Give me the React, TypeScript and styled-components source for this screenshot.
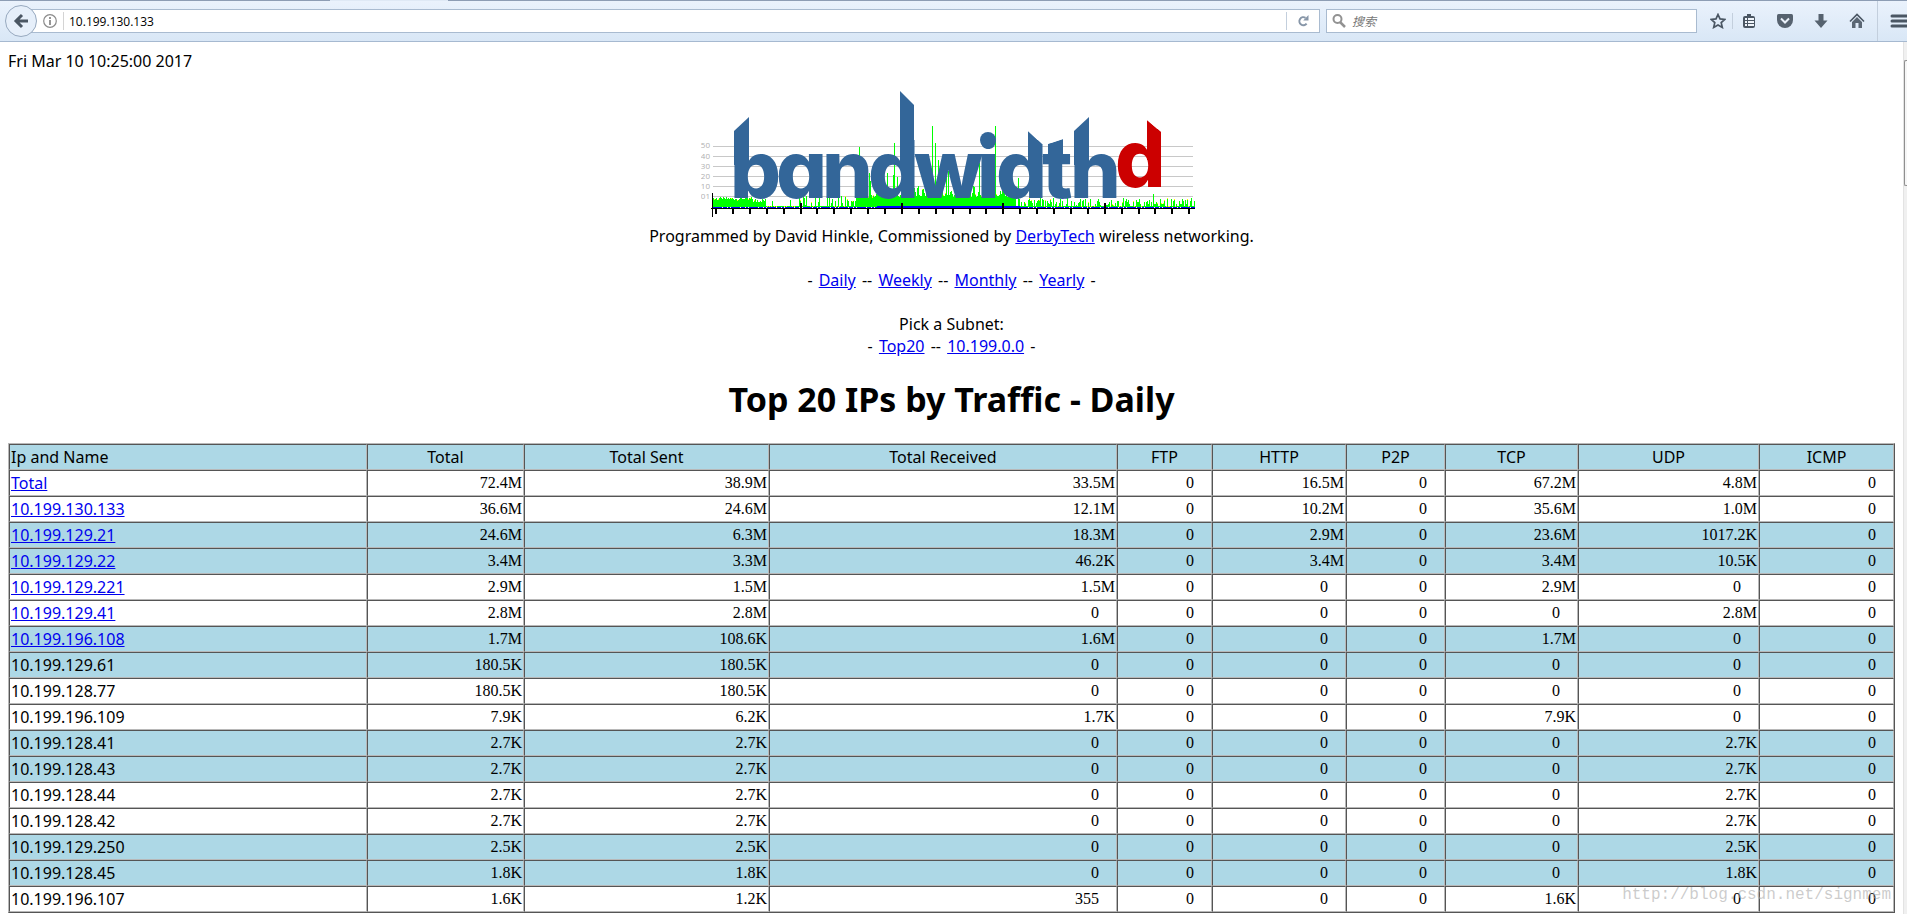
import React from 'react';
import styled, { createGlobalStyle } from 'styled-components';

const GlobalStyle = createGlobalStyle`
  * { box-sizing: border-box; }
  body {
    margin: 0;
    background: #fff;
    color: #000;
    font: 16px/22px 'Noto Sans', 'Noto Sans CJK SC', sans-serif;
    overflow-x: hidden;
  }
`;

/* ---------- browser chrome ---------- */

const TabStrip = styled.div`
  display: flex;
  height: 1px;
  background: #8d9db4;
  padding-left: 330px;
`;

const ActiveTab = styled.div`
  width: 118px;
  background: #dfe9f5;
`;

const Toolbar = styled.header`
  display: flex;
  align-items: center;
  height: 41px;
  padding-left: 5px;
  overflow: hidden;
  background: linear-gradient(#eaf2fc, #d9e7f6);
  border-bottom: 1px solid #a6b9d0;
`;

const IconButton = styled.button<{ $width?: number }>`
  display: flex;
  align-items: center;
  justify-content: center;
  flex: none;
  width: ${(p) => p.$width ?? 36}px;
  height: 24px;
  padding: 0;
  border: 0;
  background: none;
  color: #4a5663;
`;

const BackButton = styled(IconButton)`
  z-index: 1;
  height: 32px;
  border: 1px solid #97a9bf;
  border-radius: 50%;
  background: #e6effa;
`;

const Field = styled.div<{ $grow: boolean }>`
  display: flex;
  align-items: center;
  flex: ${(p) => (p.$grow ? '1 1 0' : '0 0 371px')};
  height: 24px;
  border: 1px solid #a9bbd0;
  background: #fff;
`;

const AddressField = styled(Field)`
  margin: 0 6px 0 -6px;
  padding-left: 10px;
`;

const FieldInput = styled.input<{ $inset: number }>`
  flex: 1;
  min-width: 0;
  padding: 0 0 0 ${(p) => p.$inset}px;
  border: 0;
  outline: 0;
  background: none;
  color: #000;
  font: 12px 'Open Sans', 'Noto Sans CJK SC', sans-serif;
  &::placeholder { color: #777; opacity: 1; font-style: italic; }
`;

const Divider = styled.span<{ $height: number }>`
  flex: none;
  width: 1px;
  height: ${(p) => p.$height}px;
  background: #c3cfdd;
`;

const IdentityDivider = styled(Divider)`
  margin-left: 5px;
  background: #d4d4d4;
`;

const Tools = styled.nav`
  display: flex;
  align-items: center;
  flex: none;
  width: 210px;
  padding-left: 7px;
`;

/* ---------- page ---------- */

const Viewport = styled.div`
  display: flex;
`;

const Page = styled.main`
  flex: 1;
  min-width: 0;
  padding: 8px 8px 1px;
`;

const ScrollTrack = styled.div`
  flex: none;
  width: 4px;
  padding-top: 18px;
  background: #f0f0f0;
  border-left: 1px solid #e3e3e3;
`;

const ScrollThumb = styled.div`
  height: 126px;
  border: 1px solid #8f8f8f;
  border-right: 0;
  border-radius: 2px 0 0 2px;
  background: #f6f6f6;
`;

const Intro = styled.div`
  display: flex;
  flex-direction: column;
  align-items: center;
  text-align: center;
`;

const Logo = styled.svg`
  display: block;
  margin: 16px 0 7px;
`;

const Line = styled.p<{ $gap?: boolean }>`
  margin: ${(p) => (p.$gap ? 22 : 0)}px 0 0;
`;

const Link = styled.a`
  color: #0000ee;
  text-decoration: underline;
`;

const Dashes = styled.span`
  padding: 0 2px;
`;

const Heading = styled.h1`
  margin: 21px 0 23px;
  font-size: 34px;
  line-height: 42px;
  font-weight: 700;
`;

const TrafficTable = styled.table`
  width: 100%;
  table-layout: fixed;
  border-collapse: separate;
  border-spacing: 0;
  border: 1px solid;
  border-color: #b8b8b8 #555 #555 #b8b8b8;
`;

const Row = styled.tr<{ $shaded: boolean }>`
  background: ${(p) => (p.$shaded ? '#add8e6' : '#fff')};
`;

const cellBorder = `
  height: 26px;
  padding: 1px;
  border: 1px solid;
  border-color: #555 #b8b8b8 #b8b8b8 #555;
`;

const HeadCell = styled.th<{ $left: boolean }>`
  ${cellBorder}
  font-weight: 400;
  text-align: ${(p) => (p.$left ? 'left' : 'center')};
`;

const NameCell = styled.td`
  ${cellBorder}
`;

const NumberCell = styled.td<{ $unitless: boolean }>`
  ${cellBorder}
  padding-right: ${(p) => (p.$unitless ? 17 : 1)}px;
  font-family: 'Liberation Serif', serif;
  text-align: right;
`;

const Watermark = styled.div`
  position: absolute;
  right: 16px;
  top: 884px;
  color: rgba(170, 170, 170, 0.6);
  font: 16px/22px 'Liberation Mono', monospace;
  pointer-events: none;
`;

/* ---------- data ---------- */

const columns: [string, number][] = [
  ['Ip and Name', 358], ['Total', 157], ['Total Sent', 245], ['Total Received', 348], ['FTP', 95],
  ['HTTP', 134], ['P2P', 99], ['TCP', 133], ['UDP', 181], ['ICMP', 135],
];

const hosts: [string, string][] = [
  ['Total', '72.4M 38.9M 33.5M 0 16.5M 0 67.2M 4.8M 0'],
  ['10.199.130.133', '36.6M 24.6M 12.1M 0 10.2M 0 35.6M 1.0M 0'],
  ['10.199.129.21', '24.6M 6.3M 18.3M 0 2.9M 0 23.6M 1017.2K 0'],
  ['10.199.129.22', '3.4M 3.3M 46.2K 0 3.4M 0 3.4M 10.5K 0'],
  ['10.199.129.221', '2.9M 1.5M 1.5M 0 0 0 2.9M 0 0'],
  ['10.199.129.41', '2.8M 2.8M 0 0 0 0 0 2.8M 0'],
  ['10.199.196.108', '1.7M 108.6K 1.6M 0 0 0 1.7M 0 0'],
  ['10.199.129.61', '180.5K 180.5K 0 0 0 0 0 0 0'],
  ['10.199.128.77', '180.5K 180.5K 0 0 0 0 0 0 0'],
  ['10.199.196.109', '7.9K 6.2K 1.7K 0 0 0 7.9K 0 0'],
  ['10.199.128.41', '2.7K 2.7K 0 0 0 0 0 2.7K 0'],
  ['10.199.128.43', '2.7K 2.7K 0 0 0 0 0 2.7K 0'],
  ['10.199.128.44', '2.7K 2.7K 0 0 0 0 0 2.7K 0'],
  ['10.199.128.42', '2.7K 2.7K 0 0 0 0 0 2.7K 0'],
  ['10.199.129.250', '2.5K 2.5K 0 0 0 0 0 2.5K 0'],
  ['10.199.128.45', '1.8K 1.8K 0 0 0 0 0 1.8K 0'],
  ['10.199.196.107', '1.6K 1.2K 355 0 0 0 1.6K 0 0'],
];

const linkedHosts = 7;

/* ---------- logo ---------- */

const noise = (n: number) => {
  const v = Math.sin(n * 12.9898) * 43758.5453;
  return v - Math.floor(v);
};

const peaks: Record<number, number> = {
  146: 60, 156: 34, 157: 26, 174: 34, 180: 32, 181: 64, 184: 30, 219: 81, 222: 64, 225: 47,
  233: 46, 235: 36, 266: 44, 282: 81, 305: 29, 440: 13,
};

const trafficHeight = (x: number) => {
  const r = noise(x + 3);
  if (peaks[x]) return peaks[x];
  if (x < 40) return 7 + r * 3;
  if (x < 53) return 4 + r * 5;
  if (x < 143) return r > 0.7 ? 2 + noise(x * 2) * 10 : 1;
  if (x < 303) return 10 + r * r * (x < 200 ? 6 : 12);
  return r > 0.5 ? 2 + noise(x * 2) * 7 : 1;
};

const bars = Array.from({ length: 482 }, (_, x) => ({ x: 713 + x, h: Math.round(trafficHeight(x)) }));

const ticks = Array.from({ length: 29 }, (_, i) => ({
  x: Math.round(715 + i * 16.9),
  major: i % 6 === 5,
}));

const gridLines: [string, number][] = [['50', 146], ['40', 156], ['30', 166], ['20', 176], ['10', 186], ['01', 196]];

const BandwidthLogo = () => (
  <Logo width="501" height="130" viewBox="701 88 501 130" role="img" aria-label="bandwidthd">
    <defs>
      <clipPath id="word">
        <path d="M701 88H1028V131L1042 144H1048L1063 139V150H1074V88H1202V218H701Z" />
      </clipPath>
      <clipPath id="suffix">
        <path d="M1100 88H1147V120L1161 132V218H1100Z" />
      </clipPath>
    </defs>
    {gridLines.map(([label, y]) => (
      <React.Fragment key={label}>
        <rect x="713" y={y} width="480" height="1" fill="#c8c8c8" />
        <text x="710" y={label === '50' ? y + 2 : y + 3} textAnchor="end" fontFamily="Open Sans, sans-serif" fontSize="8" fill="#b0b0b0">{label}</text>
      </React.Fragment>
    ))}
    <g shapeRendering="crispEdges">
      {bars.map(({ x, h }) => <rect key={x} x={x} y={207 - h} width="1" height={h} fill="#0f0" />)}
      {bars.filter(({ x, h }) => h < 20 && noise(x * 5) > 0.8).map(({ x, h }) => (
        <rect key={x} x={x} y={207 - h} width="1" height="1" fill="#ff0" />
      ))}
      <path d="M713 207H1195" stroke="#00f" strokeWidth="1" strokeDasharray="9 1 4 1 2 1" />
      <rect x="877" y="206" width="143" height="2" fill="#00f" />
      <rect x="711" y="208" width="484" height="1" fill="#000" />
      <rect x="712" y="193" width="1" height="24" fill="#000" />
      {ticks.map(({ x, major }) => (
        <rect key={x} x={x} y={major ? 203 : 208} width="2" height={major ? 11 : 6} fill="#000" />
      ))}
    </g>
    <g fill="#336699" clipPath="url(#word)">
      <text
        x="730 776 822 868 914 977 996 1042 1070"
        y="198"
        fontFamily="Inter, sans-serif"
        fontSize="80"
        fontWeight="800"
        style={{ fontFeatureSettings: '"cv11"' }}
      >
        bandwidth
      </text>
      <path d="M734 131L749 117V165H734Z" />
      <path d="M900 91L914 105V165H900Z" />
      <path d="M1028 131L1042 144V165H1028Z" />
      <path d="M1074 131L1089 117V165H1074Z" />
      <path d="M1048 144L1063 139V160H1048Z" />
      <circle cx="988" cy="140" r="8" />
    </g>
    <g fill="#c00" clipPath="url(#suffix)">
      <text x="1115" y="187" fontFamily="Inter, sans-serif" fontSize="80" fontWeight="800">d</text>
      <path d="M1147 120L1161 132V160H1147Z" />
    </g>
  </Logo>
);

/* ---------- toolbar icons ---------- */

const BackIcon = () => (
  <svg width="16" height="16" viewBox="0 0 16 16" fill="none" stroke="#4a5663" strokeWidth="3">
    <path d="M15 8H4M9 2L3 8L9 14" />
  </svg>
);
const InfoIcon = () => (
  <svg width="14" height="14" viewBox="0 0 14 14" fill="none" stroke="#8b8b8b">
    <circle cx="7" cy="7" r="6.3" strokeWidth="1.2" />
    <path d="M7 6V11M7 3V5" strokeWidth="1.8" />
  </svg>
);
const ReloadIcon = () => (
  <svg width="12" height="12" viewBox="0 0 12 12" fill="none" stroke="#8796a8" strokeWidth="2">
    <path d="M9.6 8.6A4 4 0 1 1 8.5 2.8" />
    <path d="M11.5 0V5.5H6.2Z" fill="#8796a8" stroke="none" />
  </svg>
);
const SearchIcon = () => (
  <svg width="14" height="14" viewBox="0 0 14 14" fill="none" stroke="#929292" strokeWidth="2">
    <circle cx="5.5" cy="5" r="4" />
    <path d="M8 8L13 13" strokeWidth="2.5" />
  </svg>
);
const StarIcon = () => (
  <svg width="16" height="16" viewBox="0 0 16 16" fill="none" stroke="#4a5663" strokeWidth="1.7">
    <path d="M8 1.5L10 5.9L14.8 6.4L11.2 9.6L12.3 14.4L8 11.9L3.7 14.4L4.8 9.6L1.2 6.4L6 5.9Z" />
  </svg>
);
const ListIcon = () => (
  <svg width="16" height="16" viewBox="0 0 16 16">
    <path d="M4 3H6V1H10V3H12A2 2 0 0 1 14 5V13A2 2 0 0 1 12 15H4A2 2 0 0 1 2 13V5A2 2 0 0 1 4 3Z" fill="#4a5663" />
    <path d="M4 5H6V7H4ZM7 5H13V7H7ZM4 8H6V10H4ZM7 8H13V10H7ZM4 11H6V13H4ZM7 11H13V13H7Z" fill="#f0f5fb" />
  </svg>
);
const PocketIcon = () => (
  <svg width="16" height="16" viewBox="0 0 16 16">
    <path d="M1.5 1H14.5Q16 1 16 2.5V7A8 8 0 0 1 0 7V2.5Q0 1 1.5 1Z" fill="#56626f" />
    <path d="M4 5.5L8 9.5L12 5.5" fill="none" stroke="#eaf1fa" strokeWidth="2" />
  </svg>
);
const DownloadIcon = () => (
  <svg width="14" height="16" viewBox="0 0 14 16">
    <path d="M4.5 1H9.5V7.5H13.5L7 15L0.5 7.5H4.5Z" fill="#56626f" />
  </svg>
);
const HomeIcon = () => (
  <svg width="16" height="16" viewBox="0 0 16 16">
    <path d="M1 8.5L8 1.5L15 8.5" fill="none" stroke="#4a5663" strokeWidth="1.6" />
    <path d="M3 9L8 4L13 9V15H9.5V10H6.5V15H3Z" fill="#5b6774" />
  </svg>
);
const MenuIcon = () => (
  <svg width="20" height="16" viewBox="0 0 20 16" stroke="#4a5663" strokeWidth="3" strokeLinecap="round">
    <path d="M2 3H18M2 8H18M2 13H18" />
  </svg>
);

const LinkList = ({ items }: { items: string[] }) => (
  <>
    {items.map((item, i) => (
      <React.Fragment key={item}>
        <Dashes>{i === 0 ? '- ' : ' -- '}</Dashes>
        <Link href="#">{item}</Link>
      </React.Fragment>
    ))}
    <Dashes>{' -'}</Dashes>
  </>
);

export default function App() {
  return (
    <>
      <GlobalStyle />
      <TabStrip><ActiveTab /></TabStrip>
      <Toolbar>
        <BackButton $width={32} aria-label="Back"><BackIcon /></BackButton>
        <AddressField $grow>
          <IconButton $width={16} aria-label="Site information"><InfoIcon /></IconButton>
          <IdentityDivider $height={18} />
          <FieldInput $inset={5} aria-label="Address" defaultValue="10.199.130.133" />
          <Divider $height={18} />
          <IconButton $width={32} aria-label="Reload"><ReloadIcon /></IconButton>
        </AddressField>
        <Field $grow={false}>
          <IconButton $width={24} aria-label="Search"><SearchIcon /></IconButton>
          <FieldInput $inset={1} aria-label="搜索" placeholder="搜索" />
        </Field>
        <Tools aria-label="Tools">
          <IconButton $width={28} aria-label="Bookmark"><StarIcon /></IconButton>
          <Divider $height={16} />
          <IconButton $width={32} aria-label="Bookmarks list"><ListIcon /></IconButton>
          <IconButton $width={40} aria-label="Pocket"><PocketIcon /></IconButton>
          <IconButton $width={32} aria-label="Downloads"><DownloadIcon /></IconButton>
          <IconButton $width={40} aria-label="Home"><HomeIcon /></IconButton>
          <Divider $height={40} />
          <IconButton $width={44} aria-label="Menu"><MenuIcon /></IconButton>
        </Tools>
      </Toolbar>
      <Viewport>
        <Page>
          <Line>Fri Mar 10 10:25:00 2017</Line>
          <Intro>
            <BandwidthLogo />
            <Line>
              Programmed by David Hinkle, Commissioned by <Link href="#">DerbyTech</Link> wireless networking.
            </Line>
            <Line $gap><LinkList items={['Daily', 'Weekly', 'Monthly', 'Yearly']} /></Line>
            <Line $gap>Pick a Subnet:</Line>
            <Line><LinkList items={['Top20', '10.199.0.0']} /></Line>
            <Heading>Top 20 IPs by Traffic - Daily</Heading>
          </Intro>
          <TrafficTable>
            <colgroup>
              {columns.map(([name, width]) => <col key={name} width={width} />)}
            </colgroup>
            <thead>
              <Row $shaded>
                {columns.map(([name], i) => <HeadCell key={name} scope="col" $left={i === 0}>{name}</HeadCell>)}
              </Row>
            </thead>
            <tbody>
              {hosts.map(([name, values], row) => (
                <Row key={name} $shaded={row % 4 > 1}>
                  <NameCell>{row < linkedHosts ? <Link href="#">{name}</Link> : name}</NameCell>
                  {values.split(' ').map((value, i) => (
                    <NumberCell key={i} $unitless={/\d$/.test(value)}>{value}</NumberCell>
                  ))}
                </Row>
              ))}
            </tbody>
          </TrafficTable>
        </Page>
        <ScrollTrack><ScrollThumb /></ScrollTrack>
      </Viewport>
      <Watermark>http://blog.csdn.net/signmem</Watermark>
    </>
  );
}
